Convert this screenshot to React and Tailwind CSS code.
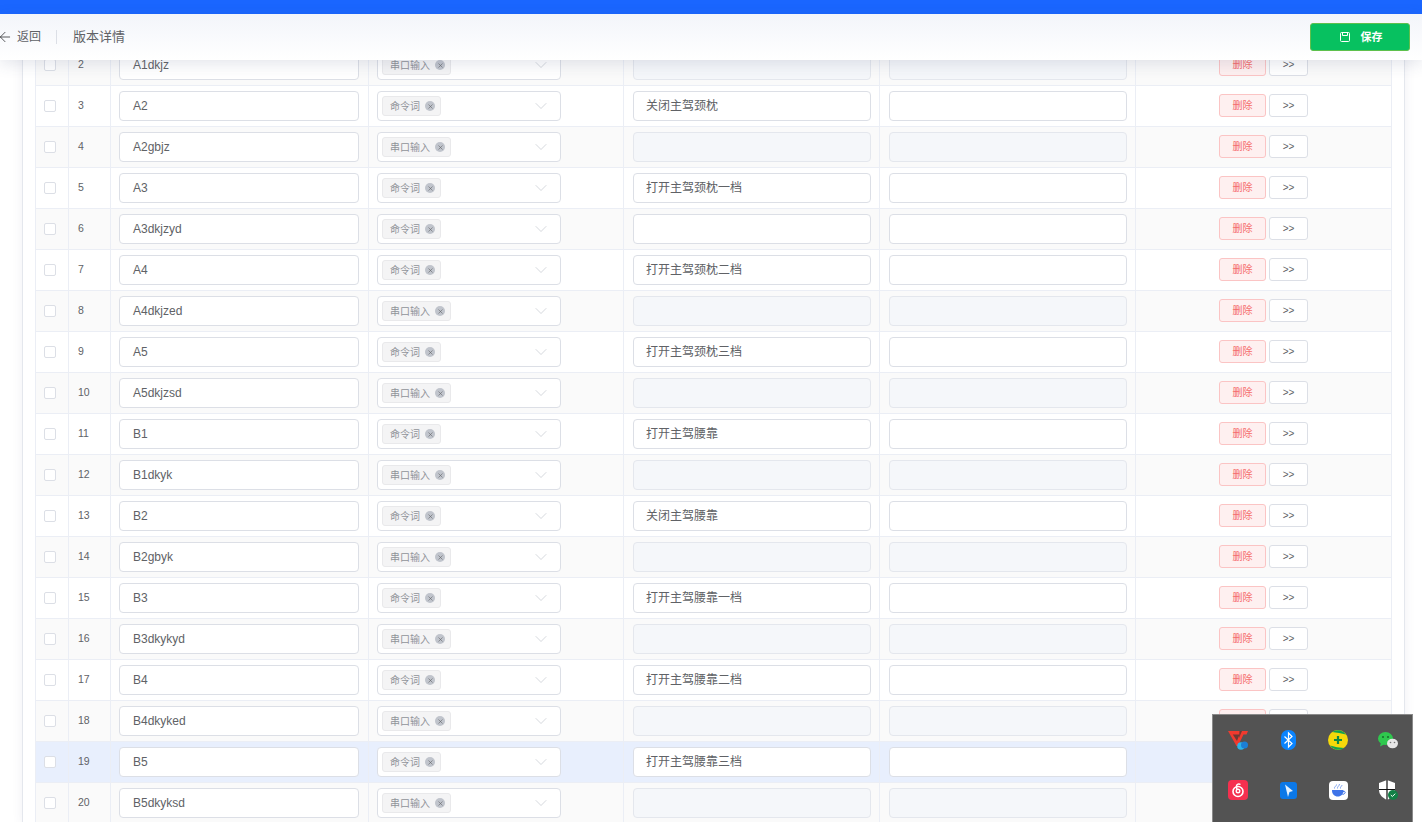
import { ArrowLeft, ChevronDown, X } from 'lucide-react'

const rows = [
  [2, 'A1dkjz', 0, null],
  [3, 'A2', 1, '关闭主驾颈枕'],
  [4, 'A2gbjz', 0, null],
  [5, 'A3', 1, '打开主驾颈枕一档'],
  [6, 'A3dkjzyd', 1, ''],
  [7, 'A4', 1, '打开主驾颈枕二档'],
  [8, 'A4dkjzed', 0, null],
  [9, 'A5', 1, '打开主驾颈枕三档'],
  [10, 'A5dkjzsd', 0, null],
  [11, 'B1', 1, '打开主驾腰靠'],
  [12, 'B1dkyk', 0, null],
  [13, 'B2', 1, '关闭主驾腰靠'],
  [14, 'B2gbyk', 0, null],
  [15, 'B3', 1, '打开主驾腰靠一档'],
  [16, 'B3dkykyd', 0, null],
  [17, 'B4', 1, '打开主驾腰靠二档'],
  [18, 'B4dkyked', 0, null],
  [19, 'B5', 1, '打开主驾腰靠三档'],
  [20, 'B5dkyksd', 0, null],
]

const field = 'h-[30px] w-full rounded-[4px] border border-[#dcdfe6] bg-white text-xs leading-[28px] text-[#606266]'
const disabled = 'h-[30px] w-full rounded-[4px] border border-[#e4e7ed] bg-[#f5f7fa]'

function Row({ no, code, isCommand, text }) {
  const bg = no === 19 ? 'bg-[#e8effd]' : no % 2 === 0 ? 'bg-[#fafafa]' : 'bg-white'
  return (
    <div className={`grid h-[41px] grid-cols-[34px_42px_258px_255px_256px_256px_256px] border-b border-[#ebeef5] ${bg}`}>
      <div className="flex items-center border-l border-r border-[#ebeef5] pl-2">
        <span className="size-3 rounded-[2px] border border-[#dcdfe6] bg-white" />
      </div>
      <div className="flex items-center border-r border-[#ebeef5] pl-[9px] text-[10.5px] text-[#606266]">{no}</div>
      <div className="flex items-center border-r border-[#ebeef5] pl-2 pr-[9px]">
        <div className={`${field} px-[13px]`}>{code}</div>
      </div>
      <div className="flex items-center border-r border-[#ebeef5] pl-2 pr-[62px]">
        <div className="flex h-[30px] w-full items-center justify-between rounded-[4px] border border-[#dcdfe6] bg-white pl-1 pr-[9px]">
          <span className="flex h-5 items-center gap-[5px] rounded-[3px] border border-[#e9e9eb] bg-[#f4f4f5] pl-[7px] pr-[5px] text-[10px] text-[#909399]">
            {isCommand ? '命令词' : '串口输入'}
            <span className="flex size-[10px] items-center justify-center rounded-full bg-[#c0c4cc] text-[#606266]">
              <X size={7} strokeWidth={2} />
            </span>
          </span>
          <ChevronDown size={20} strokeWidth={0.8} className="text-[#c0c4cc]" />
        </div>
      </div>
      <div className="flex items-center border-r border-[#ebeef5] pl-[9px] pr-2">
        {text === null ? <div className={disabled} /> : <div className={`${field} px-3`}>{text}</div>}
      </div>
      <div className="flex items-center border-r border-[#ebeef5] pl-[9px] pr-2">
        {text === null ? <div className={disabled} /> : <div className={field} />}
      </div>
      <div className="flex items-center gap-[3px] border-r border-[#ebeef5] pb-px pl-[83px]">
        <button className="h-[23px] w-[47px] rounded-[3px] border border-[#fbc4c4] bg-[#fef0f0] text-[10px] text-[#f56c6c]">删除</button>
        <button className="h-[23px] w-[39px] rounded-[3px] border border-[#dcdfe6] bg-white text-[10px] text-[#606266]">&gt;&gt;</button>
      </div>
    </div>
  )
}

function TrayIcons() {
  return (
    <div className="absolute bottom-0 right-[9px] z-20 grid h-[108px] w-[201px] grid-cols-[repeat(4,50px)] content-start border-l border-t border-r border-[#8a8a8a] bg-[#535353]">
      <div className="flex h-[50px] items-center justify-center">
        <svg width="20" height="20" viewBox="0 0 20 20">
          <path d="M0 1h20l-1.500 3.500h-3L10 16H8.500z" fill="#f03a2e" />
          <path d="M4.800 4.500h6.700L9 11z" fill="#6b3a34" />
          <path d="M11.500 1h2.500l-3 7z" fill="#6b3a34" />
          <circle cx="13" cy="16" r="3.800" fill="#2bb4ea" />
          <circle cx="16.500" cy="15" r="3.500" fill="#1b7fd6" />
        </svg>
      </div>
      <div className="flex h-[50px] items-center justify-center">
        <svg width="15" height="20" viewBox="0 0 15 20">
          <rect width="15" height="20" rx="7" fill="#0a84ff" />
          <path d="M3.500 6.500l7.500 7-3.500 3.500V3L11 6.500l-7.500 7" fill="none" stroke="#fff" strokeWidth="1.200" />
        </svg>
      </div>
      <div className="flex h-[50px] items-center justify-center">
        <svg width="20" height="20" viewBox="0 0 20 20">
          <circle cx="10" cy="10" r="10" fill="#f5d90a" />
          <path d="M4 2A10 10 0 0 1 18 4.500Q11 2.500 4 2zM2 15.500A10 10 0 0 0 16 18Q9 17.500 2 15.500z" fill="#12a150" />
          <path d="M10 6v8M6 10h8" stroke="#0f8a43" strokeWidth="2.200" />
        </svg>
      </div>
      <div className="flex h-[50px] items-center justify-center">
        <svg width="20" height="17" viewBox="0 0 20 17">
          <ellipse cx="7.500" cy="6.500" rx="7.500" ry="6.500" fill="#2fc84e" />
          <path d="M3 10.500l-1 4 4-2z" fill="#2fc84e" />
          <circle cx="5" cy="5" r="1" fill="#176b2b" />
          <circle cx="10" cy="5" r="1" fill="#176b2b" />
          <ellipse cx="14.500" cy="11.500" rx="5.500" ry="4.800" fill="#e6e6e6" />
          <circle cx="12.500" cy="10.500" r=".8" fill="#777" />
          <circle cx="16.500" cy="10.500" r=".8" fill="#777" />
        </svg>
      </div>
      <div className="flex h-[50px] items-center justify-center">
        <svg width="20" height="20" viewBox="0 0 20 20">
          <rect width="20" height="20" rx="4" fill="#f5304f" />
          <circle cx="10" cy="11.500" r="5" fill="none" stroke="#fff" strokeWidth="1.600" />
          <circle cx="10" cy="11" r="1.800" fill="none" stroke="#fff" strokeWidth="1.400" />
          <path d="M8.800 9.500L8.500 6c0-2 2.500-2.500 4-1.500" fill="none" stroke="#fff" strokeWidth="1.500" />
        </svg>
      </div>
      <div className="flex h-[50px] items-center justify-center">
        <svg width="17" height="17" viewBox="0 0 17 17">
          <rect width="17" height="17" rx="3" fill="#0b78e8" />
          <path d="M5 2.500l8 6.500-3.500 1L8 15z" fill="#e3f1ff" />
        </svg>
      </div>
      <div className="flex h-[50px] items-center justify-center">
        <svg width="19" height="19" viewBox="0 0 19 19">
          <rect width="19" height="19" rx="4" fill="#fff" />
          <path d="M3 9h11.500c.2 4-2.300 6.500-5.700 6.500S2.800 13 3 9z" fill="#3f74e8" />
          <path d="M14 10.500c3-1 3 2.500-.5 3" fill="none" stroke="#3f74e8" strokeWidth="1" />
          <path d="M5.500 7.500c-.5-2 2-2 2-4M8.500 7.500c-.5-2 2-2.500 2-4.500M11.500 7.500c-.5-2 1.500-2 1.500-3.500" fill="none" stroke="#7da2f0" strokeWidth="1" />
        </svg>
      </div>
      <div className="flex h-[50px] items-center justify-center">
        <svg width="20" height="20" viewBox="0 0 20 20">
          <path d="M9 0l8 3v7c0 5-4 8-8 10-4-2-8-5-8-10V3z" fill="#fff" />
          <path d="M9 0v20M1 9.500h16" stroke="#111" strokeWidth="1.200" />
          <circle cx="15" cy="15" r="5" fill="#118045" />
          <path d="M12.800 15l1.600 1.500 2.800-2.800" fill="none" stroke="#fff" strokeWidth="1" />
        </svg>
      </div>
    </div>
  )
}

export default function App() {
  return (
    <div className="relative h-[822px] overflow-hidden bg-white font-['Liberation_Sans','Noto_Sans_CJK_SC',sans-serif]">
      <div className="h-[14px] bg-[#1a66ff]" />
      <header className="relative z-10 flex h-[46px] items-center justify-between bg-gradient-to-b from-[#f3f5fa] to-white pr-3 shadow-[0_4px_16px_rgba(60,70,110,0.14)]">
        <div className="flex items-center text-[#606266]">
          <ArrowLeft size={16} strokeWidth={1.2} className="ml-[-3px] text-[#303133]" />
          <span className="ml-1 text-xs">返回</span>
          <span className="ml-[15px] h-[14px] w-px bg-[#dcdfe6]" />
          <span className="ml-4 text-[13px]">版本详情</span>
        </div>
        <button className="flex h-[28px] w-[100px] items-center justify-center gap-[11px] rounded-[3px] border border-[#5ec04c] bg-[#07c160] pl-[2px] text-[11px] font-bold text-white">
          <svg width="10" height="10" viewBox="0 0 10 10" fill="none" stroke="currentColor" strokeWidth="1">
            <rect x=".5" y=".5" width="9" height="9" rx="1" />
            <path d="M2.500 .5v3h5v-3" />
          </svg>
          保存
        </button>
      </header>
      <main className="ml-[22px] mr-[17px] mt-[-15px] border-x border-[#e4e7ed] px-3 shadow-[0_0_10px_rgba(60,70,110,0.08)]">
        {rows.map(([no, code, isCommand, text]) => (
          <Row key={no} no={no} code={code} isCommand={isCommand} text={text} />
        ))}
      </main>
      <TrayIcons />
    </div>
  )
}
